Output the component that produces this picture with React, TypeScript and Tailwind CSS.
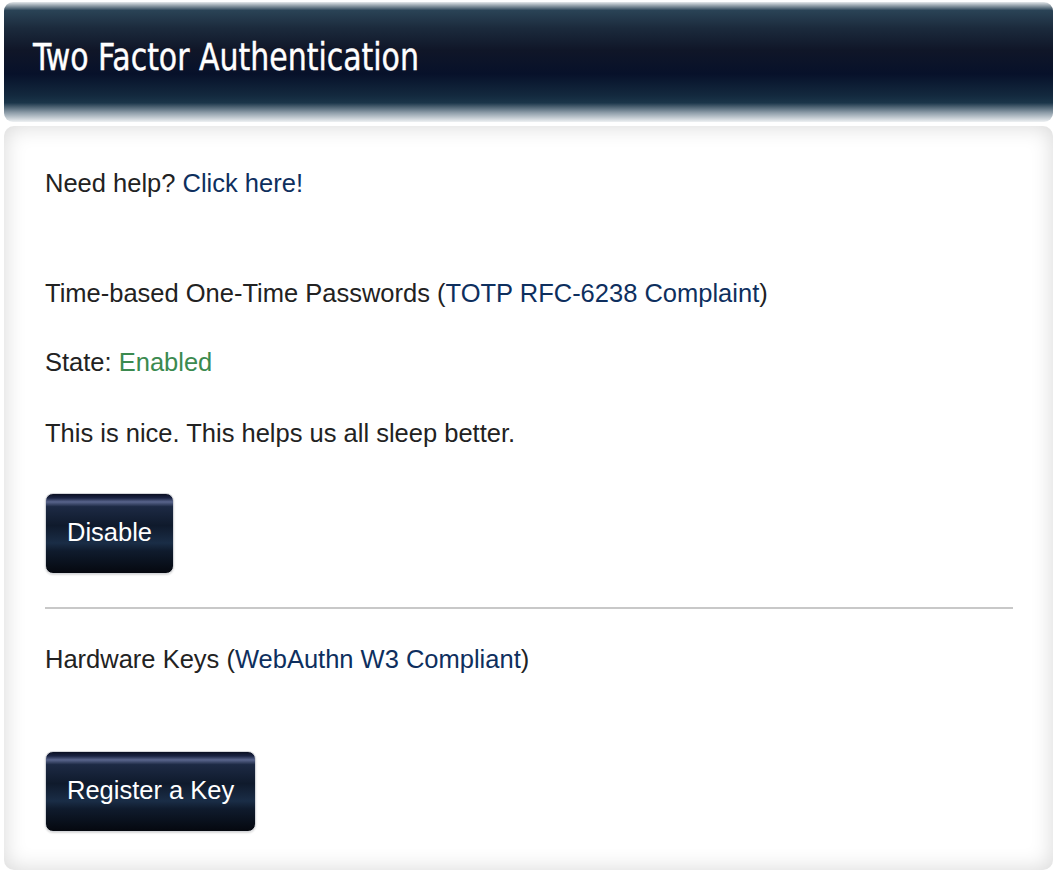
import React from 'react';

// Glossy dark navy button used in the 2FA panel
const GlossButton: React.FC<{ label: string }> = ({ label }) => (
  <button
    className="self-start rounded-lg border border-[#d4d6da] px-[21px] h-[81px] pb-[3px] text-[25.5px] text-white shadow-[0_1px_2px_rgba(0,0,0,0.15)] bg-[linear-gradient(to_bottom,#0a0f22_0%,#1a2342_5%,#59658c_10%,#1d2a44_16%,#0f1a2c_40%,#1a2d46_62%,#0f1b2d_72%,#05080f_100%)]"
  >
    {label}
  </button>
);

const Link: React.FC<{ children: React.ReactNode }> = ({ children }) => (
  <a href="#" className="text-[#0e2f5e]">
    {children}
  </a>
);

export default function App() {
  return (
    <div className="w-[1057px] h-[880px] bg-white font-['Liberation_Sans',Arial,sans-serif] text-[#222] text-[25.5px] leading-[26px] px-[4px] pt-[2px]">
      {/* Header */}
      <div className="h-[120px] rounded-[9px] flex items-center pl-[29px] pb-[8px] bg-[linear-gradient(to_bottom,#e3e7ea_0%,#2a4356_7%,#1b2a3c_22%,#101628_40%,#07112a_60%,#13293e_78%,#1a3549_84%,#8a9aa6_92%,#eef1f3_100%)]">
        <h1 className="text-white text-[37px] font-['DejaVu_Sans_Condensed','DejaVu_Sans',sans-serif] scale-x-[0.9] origin-left whitespace-nowrap [-webkit-text-stroke:0.4px_white]">
          Two Factor Authentication
        </h1>
      </div>

      {/* Panel */}
      <div className="mt-[4px] h-[744px] rounded-[10px] bg-white shadow-[inset_0_0_22px_rgba(0,0,0,0.16)] flex flex-col pl-[41px] pr-[40px] pt-[44px]">
        <p>
          Need help? <Link>Click here!</Link>
        </p>

        <p className="mt-[84px]">
          Time-based One-Time Passwords (<Link>TOTP RFC-6238 Complaint</Link>)
        </p>
        <p className="mt-[43px]">
          State: <span className="text-[#3b8a4f]">Enabled</span>
        </p>
        <p className="mt-[45px]">This is nice. This helps us all sleep better.</p>

        <div className="mt-[47px] flex">
          <GlossButton label="Disable" />
        </div>

        <hr className="mt-[33px] border-0 h-[2px] bg-[#c8c8c8]" />

        <p className="mt-[37px]">
          Hardware Keys (<Link>WebAuthn W3 Compliant</Link>)
        </p>

        <div className="mt-[79px] flex">
          <GlossButton label="Register a Key" />
        </div>
      </div>
    </div>
  );
}
